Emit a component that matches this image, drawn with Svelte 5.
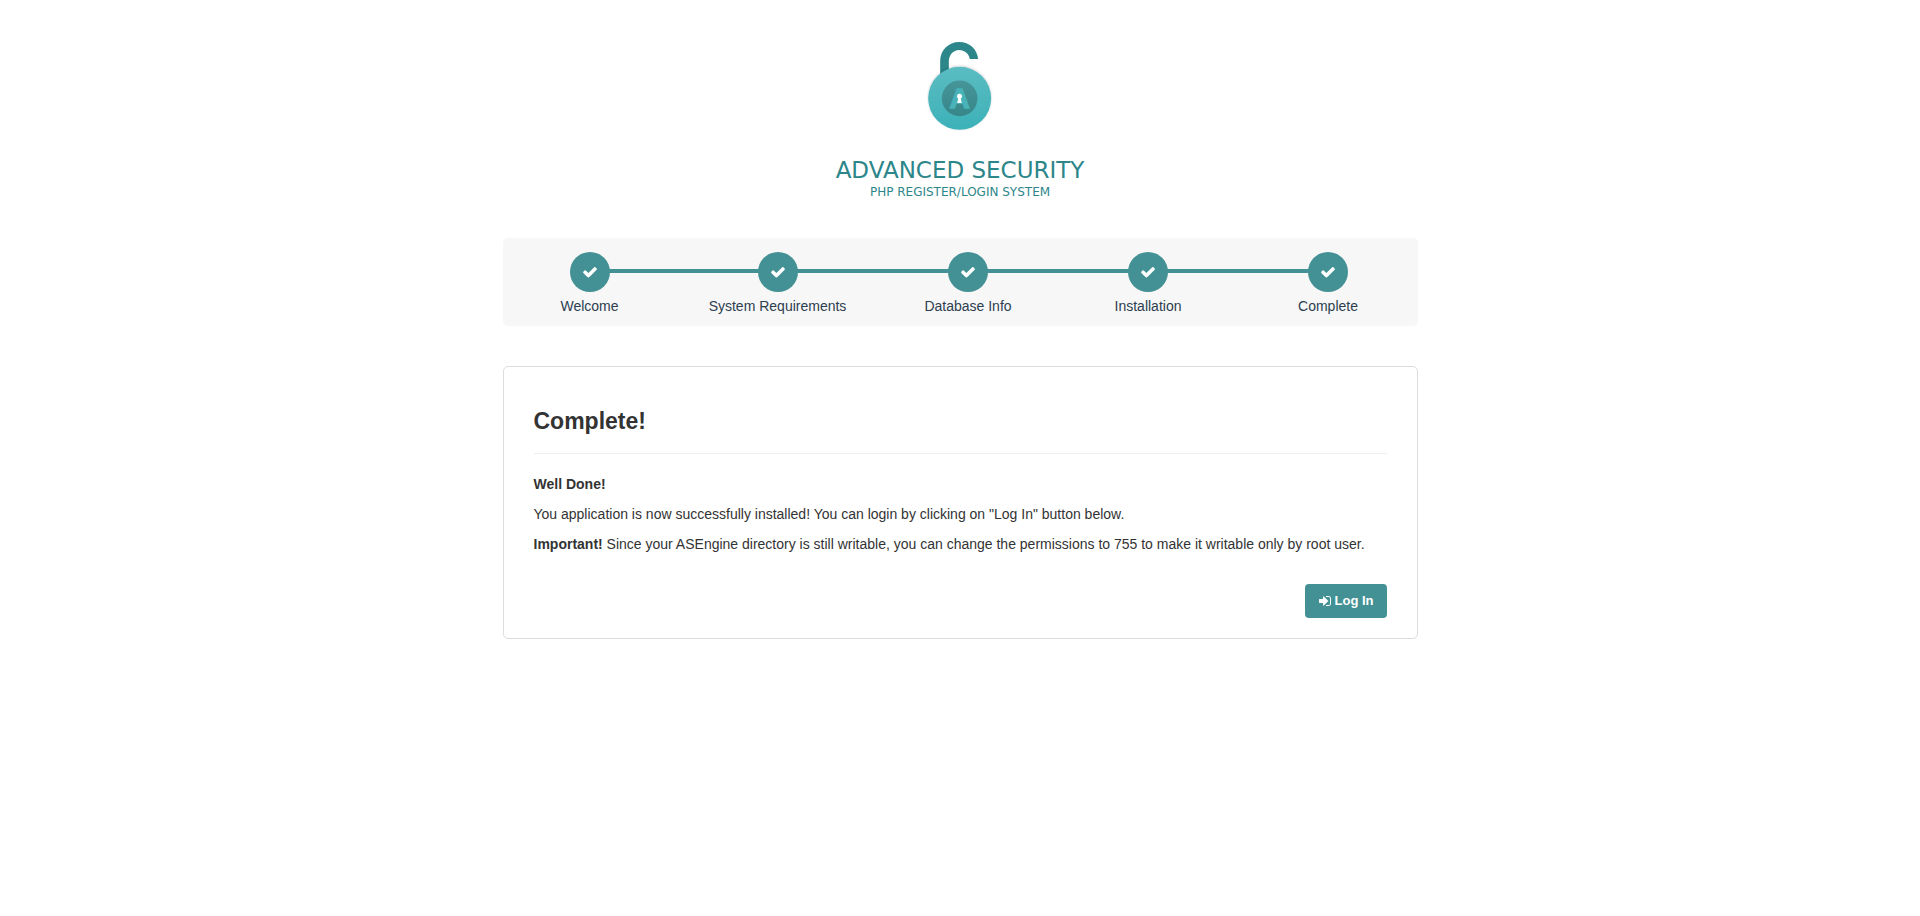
<script>
  const steps = ['Welcome', 'System Requirements', 'Database Info', 'Installation', 'Complete'];
</script>

<div class="page">
  <header class="brand">
    <svg class="lock" viewBox="81 30 200 276" aria-hidden="true">
      <defs>
        <linearGradient id="body" x1="0" y1="0" x2="0" y2="1">
          <stop offset="0" stop-color="#5bbcc2" />
          <stop offset="1" stop-color="#3cb1b8" />
        </linearGradient>
        <linearGradient id="core" x1="0" y1="0" x2="0" y2="1">
          <stop offset="0" stop-color="#469699" />
          <stop offset="1" stop-color="#37868a" />
        </linearGradient>
        <filter id="glow" x="-10%" y="-10%" width="120%" height="120%">
          <feDropShadow dx="0" dy="-2" stdDeviation="3" flood-color="#000" flood-opacity="0.2" />
        </filter>
      </defs>
      <path d="M120 140V94C120 60 145 36 177 36C208 36 231 58 234 87H209C206 71 193 60 177 60C159 60 146 75 146 94V140Z" fill="#2c868a" />
      <circle cx="178.500" cy="205" r="94.500" fill="url(#body)" filter="url(#glow)" />
      <circle cx="178.500" cy="205" r="53.500" fill="url(#core)" />
      <text class="monogram" x="178.500" y="235" text-anchor="middle">A</text>
      <circle cx="178" cy="199" r="7.500" fill="#fff" />
      <path d="M175 203h6l4 16h-14z" fill="#fff" />
    </svg>
    <div class="name">ADVANCED SECURITY</div>
    <div class="tagline">PHP REGISTER/LOGIN SYSTEM</div>
  </header>

  <ol class="steps">
    {#each steps as step}
      <li class="step">
        <span class="dot">
          <svg viewBox="0 0 1792 1792" aria-hidden="true"><path d="M1671 566q0 40-28 68l-724 724-136 136q-28 28-68 28t-68-28l-136-136-362-362q-28-28-28-68t28-68l136-136q28-28 68-28t68 28l294 295 656-657q28-28 68-28t68 28l136 136q28 28 28 68z" /></svg>
        </span>
        <span>{step}</span>
      </li>
    {/each}
  </ol>

  <main class="card">
    <h3>Complete!</h3>
    <hr />
    <p><strong>Well Done!</strong></p>
    <p>You application is now successfully installed! You can login by clicking on "Log In" button below.</p>
    <p><strong>Important!</strong> Since your ASEngine directory is still writable, you can change the permissions to 755 to make it writable only by root user.</p>
    <div class="actions">
      <button type="button">
        <svg viewBox="0 0 1792 1792" aria-hidden="true"><path d="M1312 896q0 26-19 45l-544 544q-19 19-45 19t-45-19-19-45v-288h-448q-26 0-45-19t-19-45v-384q0-26 19-45t45-19h448v-288q0-26 19-45t45-19 45 19l544 544q19 19 19 45zm352-352v704q0 119-84.500 203.500t-203.500 84.500h-320q-13 0-22.500-9.500t-9.500-22.500q0-4-1-20t-.5-26.500 3-23.500 10-19.500 20.500-6.500h320q66 0 113-47t47-113v-704q0-66-47-113t-113-47h-312l-11.500-1-11.500-3-8-5.500-7-9-2-13.500q0-4-1-20t-.5-26.500 3-23.500 10-19.500 20.500-6.500h320q119 0 203.500 84.500t84.500 203.500z" /></svg>
        Log In
      </button>
    </div>
  </main>
</div>

<style>
  :global(body) {
    margin: 0;
    background: #fff;
  }
  .page {
    box-sizing: border-box;
    max-width: 915px;
    margin: 0 auto;
    padding: 40px 0;
    font: 14px/20px "Helvetica Neue", Helvetica, "Liberation Sans", Arial, sans-serif;
    color: #333;
  }
  .brand {
    display: flex;
    flex-direction: column;
    align-items: center;
    color: #2c868a;
    font-family: "DejaVu Sans", Verdana, sans-serif;
  }
  .lock {
    display: block;
    width: 67px;
    height: 92px;
    margin-bottom: 24px;
  }
  .monogram {
    font: bold 82px "Liberation Sans Narrow", "Liberation Sans", sans-serif;
    fill: #48b3b8;
    stroke: #48b3b8;
    stroke-width: 5px;
  }
  .name {
    font-size: 23px;
    line-height: 28px;
  }
  .tagline {
    font-size: 12px;
    line-height: 16px;
  }
  .steps {
    display: grid;
    grid-template-columns: 174fr 202fr 179fr 181fr 179fr;
    margin: 38px 0 40px;
    padding: 14px 0 10px;
    list-style: none;
    background: #f7f7f7;
    border-radius: 5px;
    color: #2c3e50;
  }
  .step {
    display: flex;
    flex-direction: column;
    align-items: center;
    gap: 4px;
    background: linear-gradient(#439194, #439194) 0 17px / 100% 4px no-repeat;
  }
  .step:first-child {
    background-position: 100% 17px;
    background-size: 50% 4px;
  }
  .step:last-child {
    background-size: 50% 4px;
  }
  .dot {
    display: grid;
    place-items: center;
    width: 40px;
    height: 40px;
    border-radius: 50%;
    background: #439194;
  }
  .dot svg {
    width: 16px;
    height: 16px;
    fill: #fff;
  }
  .card {
    padding: 40px 30px 20px;
    border: 1px solid #ddd;
    border-radius: 5px;
  }
  h3 {
    margin: 0;
    font-size: 23px;
    line-height: 28px;
  }
  hr {
    margin: 18px 0 20px;
    border: 0;
    border-top: 1px solid #eee;
  }
  p {
    margin: 0 0 10px;
  }
  .actions {
    display: flex;
    justify-content: flex-end;
    padding-top: 20px;
  }
  button {
    display: flex;
    align-items: center;
    gap: 3px;
    padding: 7px 13px;
    border: 0;
    border-radius: 4px;
    background: #439194;
    color: #fff;
    font: bold 13px/20px "Helvetica Neue", Helvetica, "Liberation Sans", Arial, sans-serif;
    cursor: pointer;
  }
  button svg {
    width: 14px;
    height: 14px;
    fill: #fff;
  }
</style>
